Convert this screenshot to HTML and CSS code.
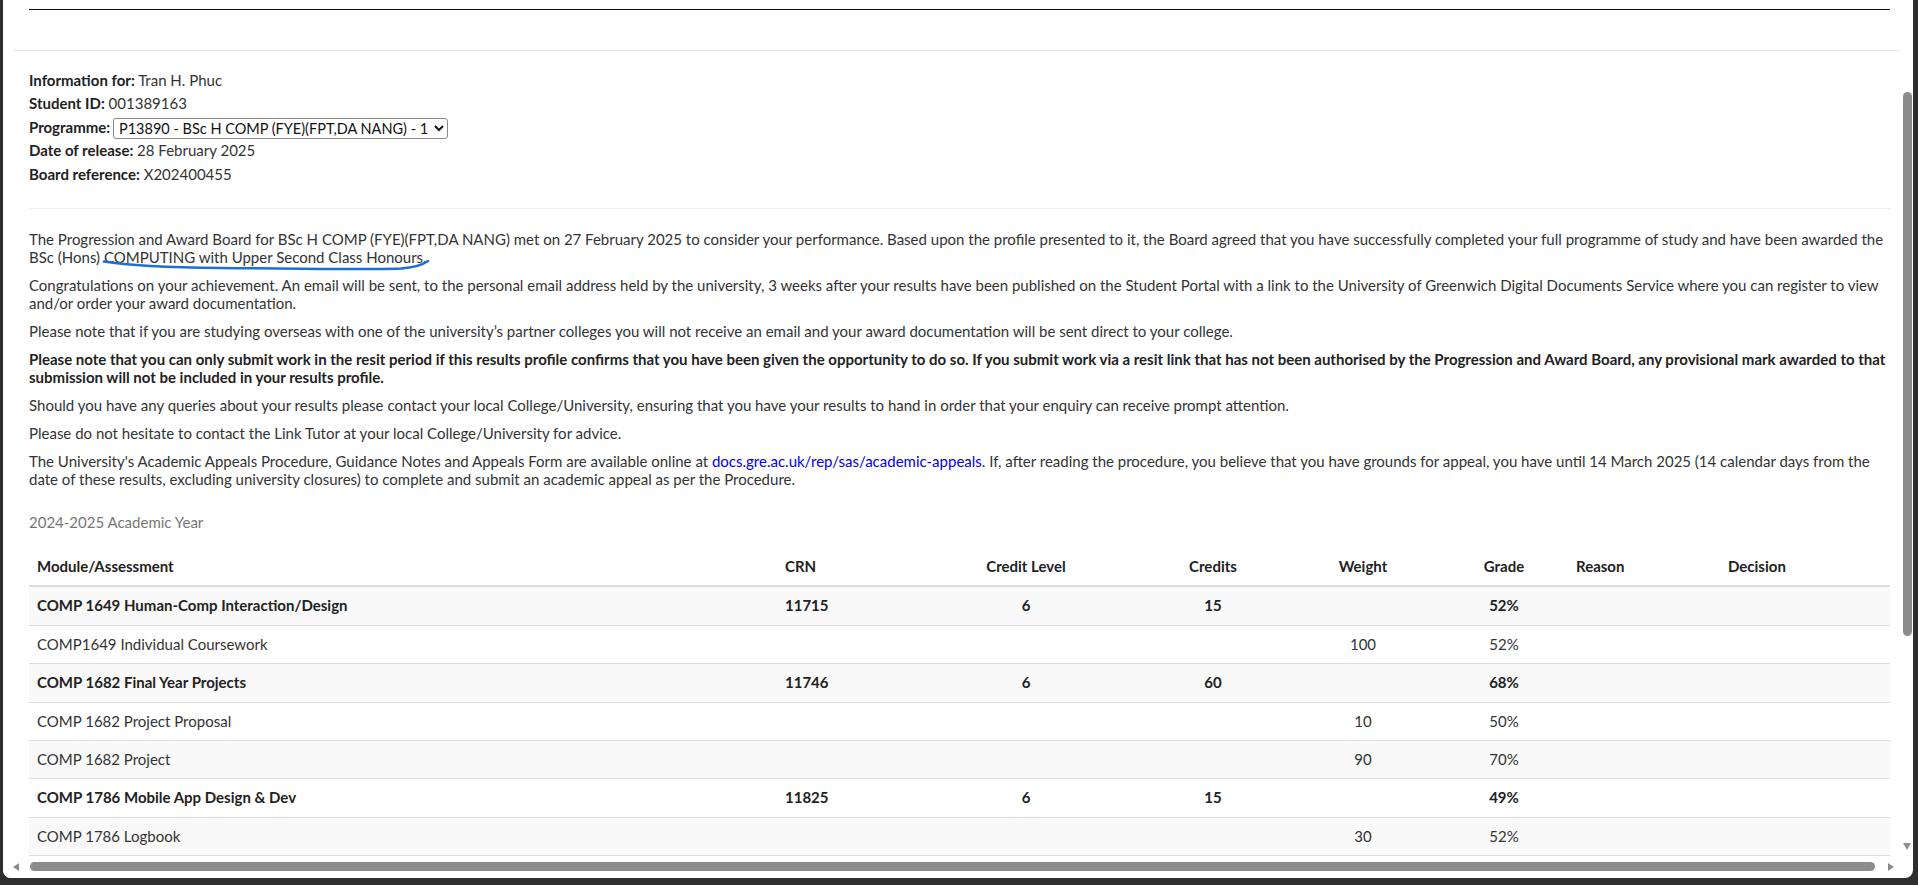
FILE: index.html
```html
<!DOCTYPE html>
<html lang="en">
<head>
<meta charset="utf-8">
<title>Results Profile</title>
<link rel="stylesheet" href="styles.css">
</head>
<body>
<div class="window">
  <div class="viewport">
    <div class="page">
      <div class="top-rule"></div>
      <div class="panel">
        <div class="info">
          <div class="info-line"><b>Information for:</b> Tran H. Phuc</div>
          <div class="info-line"><b>Student ID:</b> 001389163</div>
          <div class="info-line"><b>Programme:</b> <select class="prog"><option>P13890 - BSc H COMP (FYE)(FPT,DA NANG) - 1</option></select></div>
          <div class="info-line"><b>Date of release:</b> 28 February 2025</div>
          <div class="info-line"><b>Board reference:</b> X202400455</div>
        </div>
        <hr class="sep">
        <div class="text">
          <p class="annotated">The Progression and Award Board for BSc H COMP (FYE)(FPT,DA NANG) met on 27 February 2025 to consider your performance. Based upon the profile presented to it, the Board agreed that you have successfully completed your full programme of study and have been awarded the BSc (Hons) COMPUTING with Upper Second Class Honours.<svg class="scribble" width="360" height="16" viewBox="0 0 360 16"><path d="M3 3.5 C30 8 70 9.5 120 10 C190 10.5 260 12 300 10.5 C315 9.5 322 6.5 327 3" fill="none" stroke="#1c6fd8" stroke-width="2.6" stroke-linecap="round"/></svg></p>
          <p>Congratulations on your achievement. An email will be sent, to the personal email address held by the university, 3 weeks after your results have been published on the Student Portal with a link to the University of Greenwich Digital Documents Service where you can register to view and/or order your award documentation.</p>
          <p>Please note that if you are studying overseas with one of the university’s partner colleges you will not receive an email and your award documentation will be sent direct to your college.</p>
          <p class="strong">Please note that you can only submit work in the resit period if this results profile confirms that you have been given the opportunity to do so. If you submit work via a resit link that has not been authorised by the Progression and Award Board, any provisional mark awarded to that submission will not be included in your results profile.</p>
          <p>Should you have any queries about your results please contact your local College/University, ensuring that you have your results to hand in order that your enquiry can receive prompt attention.</p>
          <p>Please do not hesitate to contact the Link Tutor at your local College/University for advice.</p>
          <p>The University's Academic Appeals Procedure, Guidance Notes and Appeals Form are available online at <a href="#">docs.gre.ac.uk/rep/sas/academic-appeals</a>. If, after reading the procedure, you believe that you have grounds for appeal, you have until 14 March 2025 (14 calendar days from the date of these results, excluding university closures) to complete and submit an academic appeal as per the Procedure.</p>
        </div>
        <h4 class="year">2024-2025 Academic Year</h4>
        <table class="results">
          <colgroup>
            <col class="c-mod"><col class="c-crn"><col class="c-lvl"><col class="c-cred"><col class="c-wt"><col class="c-grade"><col class="c-reason"><col class="c-dec">
          </colgroup>
          <thead>
            <tr><th>Module/Assessment</th><th>CRN</th><th class="ctr">Credit Level</th><th class="ctr">Credits</th><th class="ctr">Weight</th><th class="ctr">Grade</th><th>Reason</th><th>Decision</th></tr>
          </thead>
          <tbody>
            <tr class="module"><td>COMP 1649 Human-Comp Interaction/Design</td><td>11715</td><td class="ctr">6</td><td class="ctr">15</td><td class="ctr"></td><td class="ctr">52%</td><td></td><td></td></tr>
            <tr><td>COMP1649 Individual Coursework</td><td></td><td class="ctr"></td><td class="ctr"></td><td class="ctr">100</td><td class="ctr">52%</td><td></td><td></td></tr>
            <tr class="module"><td>COMP 1682 Final Year Projects</td><td>11746</td><td class="ctr">6</td><td class="ctr">60</td><td class="ctr"></td><td class="ctr">68%</td><td></td><td></td></tr>
            <tr><td>COMP 1682 Project Proposal</td><td></td><td class="ctr"></td><td class="ctr"></td><td class="ctr">10</td><td class="ctr">50%</td><td></td><td></td></tr>
            <tr><td>COMP 1682 Project</td><td></td><td class="ctr"></td><td class="ctr"></td><td class="ctr">90</td><td class="ctr">70%</td><td></td><td></td></tr>
            <tr class="module"><td>COMP 1786 Mobile App Design &amp; Dev</td><td>11825</td><td class="ctr">6</td><td class="ctr">15</td><td class="ctr"></td><td class="ctr">49%</td><td></td><td></td></tr>
            <tr><td>COMP 1786 Logbook</td><td></td><td class="ctr"></td><td class="ctr"></td><td class="ctr">30</td><td class="ctr">52%</td><td></td><td></td></tr>
          </tbody>
        </table>
      </div>
    </div>
    <div class="vscroll">
      <div class="vthumb"></div>
      <div class="varrow"></div>
    </div>
  </div>
  <div class="hscroll">
    <div class="harrow-left"></div>
    <div class="hthumb"></div>
    <div class="harrow-right"></div>
  </div>
</div>
</body>
</html>
```

FILE: styles.css
```css
html, body {
  margin: 0;
  padding: 0;
  height: 100%;
  overflow: hidden;
}
body {
  background: #2e2e2e;
  font-family: Lato, "Open Sans", sans-serif;
  font-size: 15px;
  color: #333;
}
.window {
  margin-left: 3px;
  width: 1910px;
  height: 878px;
  background: #fff;
  border-radius: 0 0 8px 8px;
  overflow: hidden;
  display: grid;
  grid-template-rows: 856px 22px;
}
.viewport {
  display: grid;
  grid-template-columns: 1897px 13px;
  overflow: hidden;
}
.page {
  padding: 9px 0 0 11px;
  overflow: hidden;
}
.top-rule {
  height: 1px;
  background: #0b0b3b;
  margin: 0 10px 0 15px;
}
.panel {
  margin-top: 40px;
  border-top: 1px solid #e7e7e7;
  padding: 18px 10px 0 15px;
}
.info-line {
  line-height: 23.4px;
  height: 23.4px;
  color: #333;
}
.info-line b {
  color: #222;
}
.prog {
  font-family: Lato, sans-serif;
  font-size: 14.5px;
  color: #111;
  height: 21px;
  padding: 0 1px;
  margin-left: -1px;
  border: 1px solid #8a8a8a;
  border-radius: 3px;
  background: #fff;
  vertical-align: middle;
}
.sep {
  border: 0;
  border-top: 1px solid #eee;
  margin: 22px 0 21px;
}
.text p {
  margin: 0 0 10px;
  line-height: 18px;
}
.text p.strong {
  font-weight: bold;
  color: #222;
}
.annotated {
  position: relative;
}
.scribble {
  position: absolute;
  left: 72px;
  top: 28px;
  pointer-events: none;
}
a {
  color: #0000ee;
  text-decoration: none;
}
.year {
  margin: 24px 0 16px;
  font-size: 15px;
  font-weight: normal;
  line-height: 20px;
  color: #777;
}
.results {
  width: 1861px;
  table-layout: fixed;
  border-collapse: collapse;
  border-spacing: 0;
}
.c-mod { width: 748px; }
.c-crn { width: 135px; }
.c-lvl { width: 228px; }
.c-cred { width: 146px; }
.c-wt { width: 154px; }
.c-grade { width: 128px; }
.c-reason { width: 152px; }
.c-dec { width: 170px; }
.results th,
.results td {
  padding: 8px;
  line-height: 21.4px;
  text-align: left;
  vertical-align: top;
  white-space: nowrap;
}
.results th {
  font-weight: bold;
  color: #222;
  border-bottom: 2px solid #ddd;
}
.results td {
  border-bottom: 1px solid #ddd;
}
.results .ctr {
  text-align: center;
}
.results tbody tr:nth-child(odd) td {
  background: #f9f9f9;
}
.results tr.module td {
  font-weight: bold;
  color: #222;
}
.vscroll {
  background: #fff;
  display: flex;
  flex-direction: column;
  align-items: center;
  padding-top: 92px;
}
.vthumb {
  width: 9px;
  height: 544px;
  background: #8c8c8c;
  border-radius: 5px;
  margin-left: 1px;
}
.varrow {
  margin-top: auto;
  margin-bottom: 6px;
  margin-left: 1px;
  width: 0;
  height: 0;
  border-left: 4px solid transparent;
  border-right: 4px solid transparent;
  border-top: 7px solid #8c8c8c;
}
.hscroll {
  background: #fff;
  display: flex;
  align-items: flex-start;
  padding: 6px 0 0 10px;
  width: 1897px;
  box-sizing: border-box;
}
.harrow-left {
  width: 0;
  height: 0;
  margin-top: 1px;
  border-top: 4px solid transparent;
  border-bottom: 4px solid transparent;
  border-right: 6px solid #8c8c8c;
}
.hthumb {
  margin-left: 11px;
  width: 1845px;
  height: 9px;
  background: #8c8c8c;
  border-radius: 5px;
}
.harrow-right {
  width: 0;
  height: 0;
  margin-top: 1px;
  margin-left: 13px;
  border-top: 4px solid transparent;
  border-bottom: 4px solid transparent;
  border-left: 6px solid #8c8c8c;
}
```
